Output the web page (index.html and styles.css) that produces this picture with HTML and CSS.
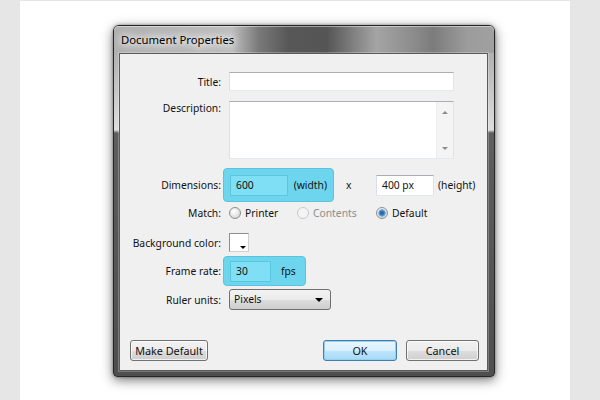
FILE: index.html
```html
<!DOCTYPE html>
<html>
<head>
<meta charset="utf-8" />
<title>Document Properties</title>
<link rel="stylesheet" href="styles.css">
</head>
<body>
<div class="page">
	<div class="dialog">
		<div class="titlebar">Document Properties</div>
		<div class="panel">
			<div class="row row-title">
				<span class="lbl">Title:</span>
				<div class="field field-long"></div>
			</div>
			<div class="row row-desc">
				<span class="lbl">Description:</span>
				<div class="field field-area">
					<div class="scroll"><span class="arr up"></span><span class="arr down"></span></div>
				</div>
			</div>
			<div class="row row-dims">
				<span class="lbl">Dimensions:</span>
				<div class="hl hl-dims">
					<div class="field cyan w58">600</div>
					<span class="unit">(width)</span>
				</div>
				<span class="times">x</span>
				<div class="field w58">400 px</div>
				<span class="unit-h">(height)</span>
			</div>
			<div class="row row-match">
				<span class="lbl">Match:</span>
				<span class="opt opt-printer"><span class="radio"></span>Printer</span>
				<span class="opt opt-contents disabled"><span class="radio"></span>Contents</span>
				<span class="opt"><span class="radio on"></span>Default</span>
			</div>
			<div class="row row-bg">
				<span class="lbl">Background color:</span>
				<div class="swatch"><span class="tri"></span></div>
			</div>
			<div class="row row-rate">
				<span class="lbl">Frame rate:</span>
				<div class="hl hl-rate">
					<div class="field cyan w41">30</div>
					<span class="fps">fps</span>
				</div>
			</div>
			<div class="row row-ruler">
				<span class="lbl">Ruler units:</span>
				<div class="select">Pixels<span class="caret"></span></div>
			</div>
			<div class="buttons">
				<button class="btn btn-make">Make Default</button>
				<span class="spacer"></span>
				<button class="btn btn-ok">OK</button>
				<button class="btn btn-cancel">Cancel</button>
			</div>
		</div>
	</div>
</div>
</body>
</html>
```

FILE: styles.css
```css
html, body {
	margin: 0;
	padding: 0;
}
body {
	background-color: #e6e6e6;
	font-family: "Noto Sans", "Open Sans", sans-serif;
	font-size: 10.3px;
	color: #111;
}
div.page {
	margin: 1px 0 0 20px;
	width: 550px;
	height: 399px;
	padding-top: 24px;
	box-sizing: border-box;
	background-color: #fff;
}
div.dialog {
	margin-left: 93px;
	width: 382px;
	height: 352px;
	box-sizing: border-box;
	border: 1px solid #262626;
	border-radius: 6px 6px 4px 4px;
	padding: 0 6px 5px 5px;
	display: flex;
	flex-direction: column;
	background: linear-gradient(to bottom, #a4a4a4 0, #b8b8b8 40px, #dedede 104px, #5e5e5e 107px, #4e4e4e 100%);
	box-shadow: 0 3px 12px rgba(0,0,0,0.55), 0 0 3px rgba(0,0,0,0.4);
}
div.titlebar {
	height: 27px;
	line-height: 27px;
	margin: 0 -6px 0 -5px;
	padding-left: 7px;
	border-radius: 5px 5px 0 0;
	font-size: 11.3px;
	color: #000;
	text-shadow: 0 0 6px #fff, 0 0 10px #fff, 0 0 12px #fff;
	background: linear-gradient(to right, #b0b0b0 0%, #bebebe 31%, #7a7a7a 38%, #575757 46%, #555555 56%, #7a7a7a 62%, #a4a4a4 69%, #8e8e8e 78%, #7c7c7c 84%, #9c9c9c 93%, #a0a0a0 100%);
	box-shadow: inset 0 1px 0 rgba(255,255,255,0.45);
}
div.panel {
	flex: 1;
	display: flex;
	flex-direction: column;
	background-color: #f0f0f0;
	border: 1px solid #5a5a5a;
	box-shadow: 0 0 0 1px rgba(255,255,255,0.25);
}
div.row {
	display: flex;
	align-items: center;
}
span.lbl {
	width: 101px;
	margin-right: 8px;
	text-align: right;
	flex-shrink: 0;
}
div.row-title { margin-top: 18px; height: 19px; }
div.row-desc { margin-top: 10px; height: 58px; align-items: flex-start; }
div.row-desc span.lbl { line-height: 14px; }
div.row-dims { margin-top: 9px; height: 34px; }
div.row-match { height: 22px; }
div.row-bg { margin-top: 9px; height: 19px; }
div.row-rate { margin-top: 4px; height: 30px; }
div.row-ruler { margin-top: 3px; height: 21px; }

div.field {
	box-sizing: border-box;
	height: 21px;
	line-height: 19px;
	padding-left: 5px;
	background-color: #fff;
	border: 1px solid;
	border-color: #abadb3 #e2e3ea #e3e9ef #dbdfe6;
}
div.field-long {
	width: 225px;
	height: 19px;
}
div.field-area {
	width: 225px;
	height: 58px;
	position: relative;
}
div.scroll {
	position: absolute;
	top: 0;
	right: 0;
	bottom: 0;
	width: 16px;
	background-color: #f4f4f4;
	border-left: 1px solid #ececec;
}
span.arr {
	position: absolute;
	left: 5px;
	width: 0;
	height: 0;
	border-left: 3px solid transparent;
	border-right: 3px solid transparent;
}
span.arr.up {
	top: 9px;
	border-bottom: 3px solid #8c8c8c;
}
span.arr.down {
	bottom: 8px;
	border-top: 3px solid #8c8c8c;
}
div.w58 { width: 58px; }
div.w41 { width: 41px; }
div.field.cyan {
	background-color: #7fdff5;
	border-color: #5ec5de;
}
div.hl {
	box-sizing: border-box;
	margin-left: -6px;
	padding: 0 6px;
	height: 100%;
	display: flex;
	align-items: center;
	background-color: #6dd6ee;
	border: 1px solid #5cc3dc;
	border-radius: 4px;
}
div.hl-dims { width: 111px; }
div.hl-rate { width: 83px; }
span.unit { margin-left: 6px; }
span.fps { margin-left: 10px; }
span.times {
	width: 42px;
	padding-left: 12px;
	box-sizing: border-box;
}
span.unit-h { margin-left: 4px; }

span.opt {
	display: flex;
	align-items: center;
}
span.opt-printer { width: 68px; }
span.opt-contents { width: 79px; }
span.opt.disabled { color: #8d8d8d; }
span.radio {
	box-sizing: border-box;
	width: 12px;
	height: 12px;
	margin-right: 4px;
	border-radius: 50%;
	border: 1px solid #8e8f8f;
	background: radial-gradient(circle at 40% 35%, #ffffff 0, #e6e6e6 50%, #c9c9c9 100%);
}
span.opt.disabled span.radio {
	border-color: #c9c9c9;
	background: #f4f4f4;
}
span.radio.on {
	background: radial-gradient(circle, #1f5f9a 0, #2f79b8 2px, #7fb6e0 3.5px, transparent 4px), radial-gradient(circle at 40% 35%, #ffffff 0, #e6e6e6 50%, #c9c9c9 100%);
}

div.swatch {
	box-sizing: border-box;
	width: 20px;
	height: 19px;
	position: relative;
	background-color: #fff;
	border: 1px solid #8f8f8f;
	border-right-color: #cfcfcf;
	border-bottom-color: #cfcfcf;
}
span.tri {
	position: absolute;
	right: 2px;
	bottom: 2px;
	width: 0;
	height: 0;
	border-left: 3px solid transparent;
	border-right: 3px solid transparent;
	border-top: 3px solid #000;
}

div.select {
	box-sizing: border-box;
	width: 102px;
	height: 21px;
	line-height: 19px;
	padding-left: 4px;
	position: relative;
	border: 1px solid #707070;
	border-radius: 3px;
	background: linear-gradient(to bottom, #f2f2f2 0, #ebebeb 50%, #dddddd 51%, #cfcfcf 100%);
}
span.caret {
	position: absolute;
	right: 7px;
	top: 8px;
	width: 0;
	height: 0;
	border-left: 4px solid transparent;
	border-right: 4px solid transparent;
	border-top: 4px solid #000;
}

div.buttons {
	margin-top: auto;
	display: flex;
	padding: 0 8px 9px 10px;
}
span.spacer { flex: 1; }
button.btn {
	box-sizing: border-box;
	height: 21px;
	padding: 0;
	font-family: inherit;
	font-size: 10.8px;
	color: #111;
	border: 1px solid #707070;
	border-radius: 3px;
	background: linear-gradient(to bottom, #f2f2f2 0, #ebebeb 50%, #dddddd 51%, #cfcfcf 100%);
	box-shadow: inset 0 0 0 1px rgba(255,255,255,0.7);
}
button.btn-make { width: 78px; }
button.btn-ok {
	width: 74px;
	margin-right: 9px;
	border-color: #3c7fb1;
	background: linear-gradient(to bottom, #eaf6fd 0, #d9f0fc 50%, #bee6fd 51%, #a7d9f5 100%);
	box-shadow: inset 0 0 0 1px #98d1ef;
}
button.btn-cancel { width: 73px; }
```
